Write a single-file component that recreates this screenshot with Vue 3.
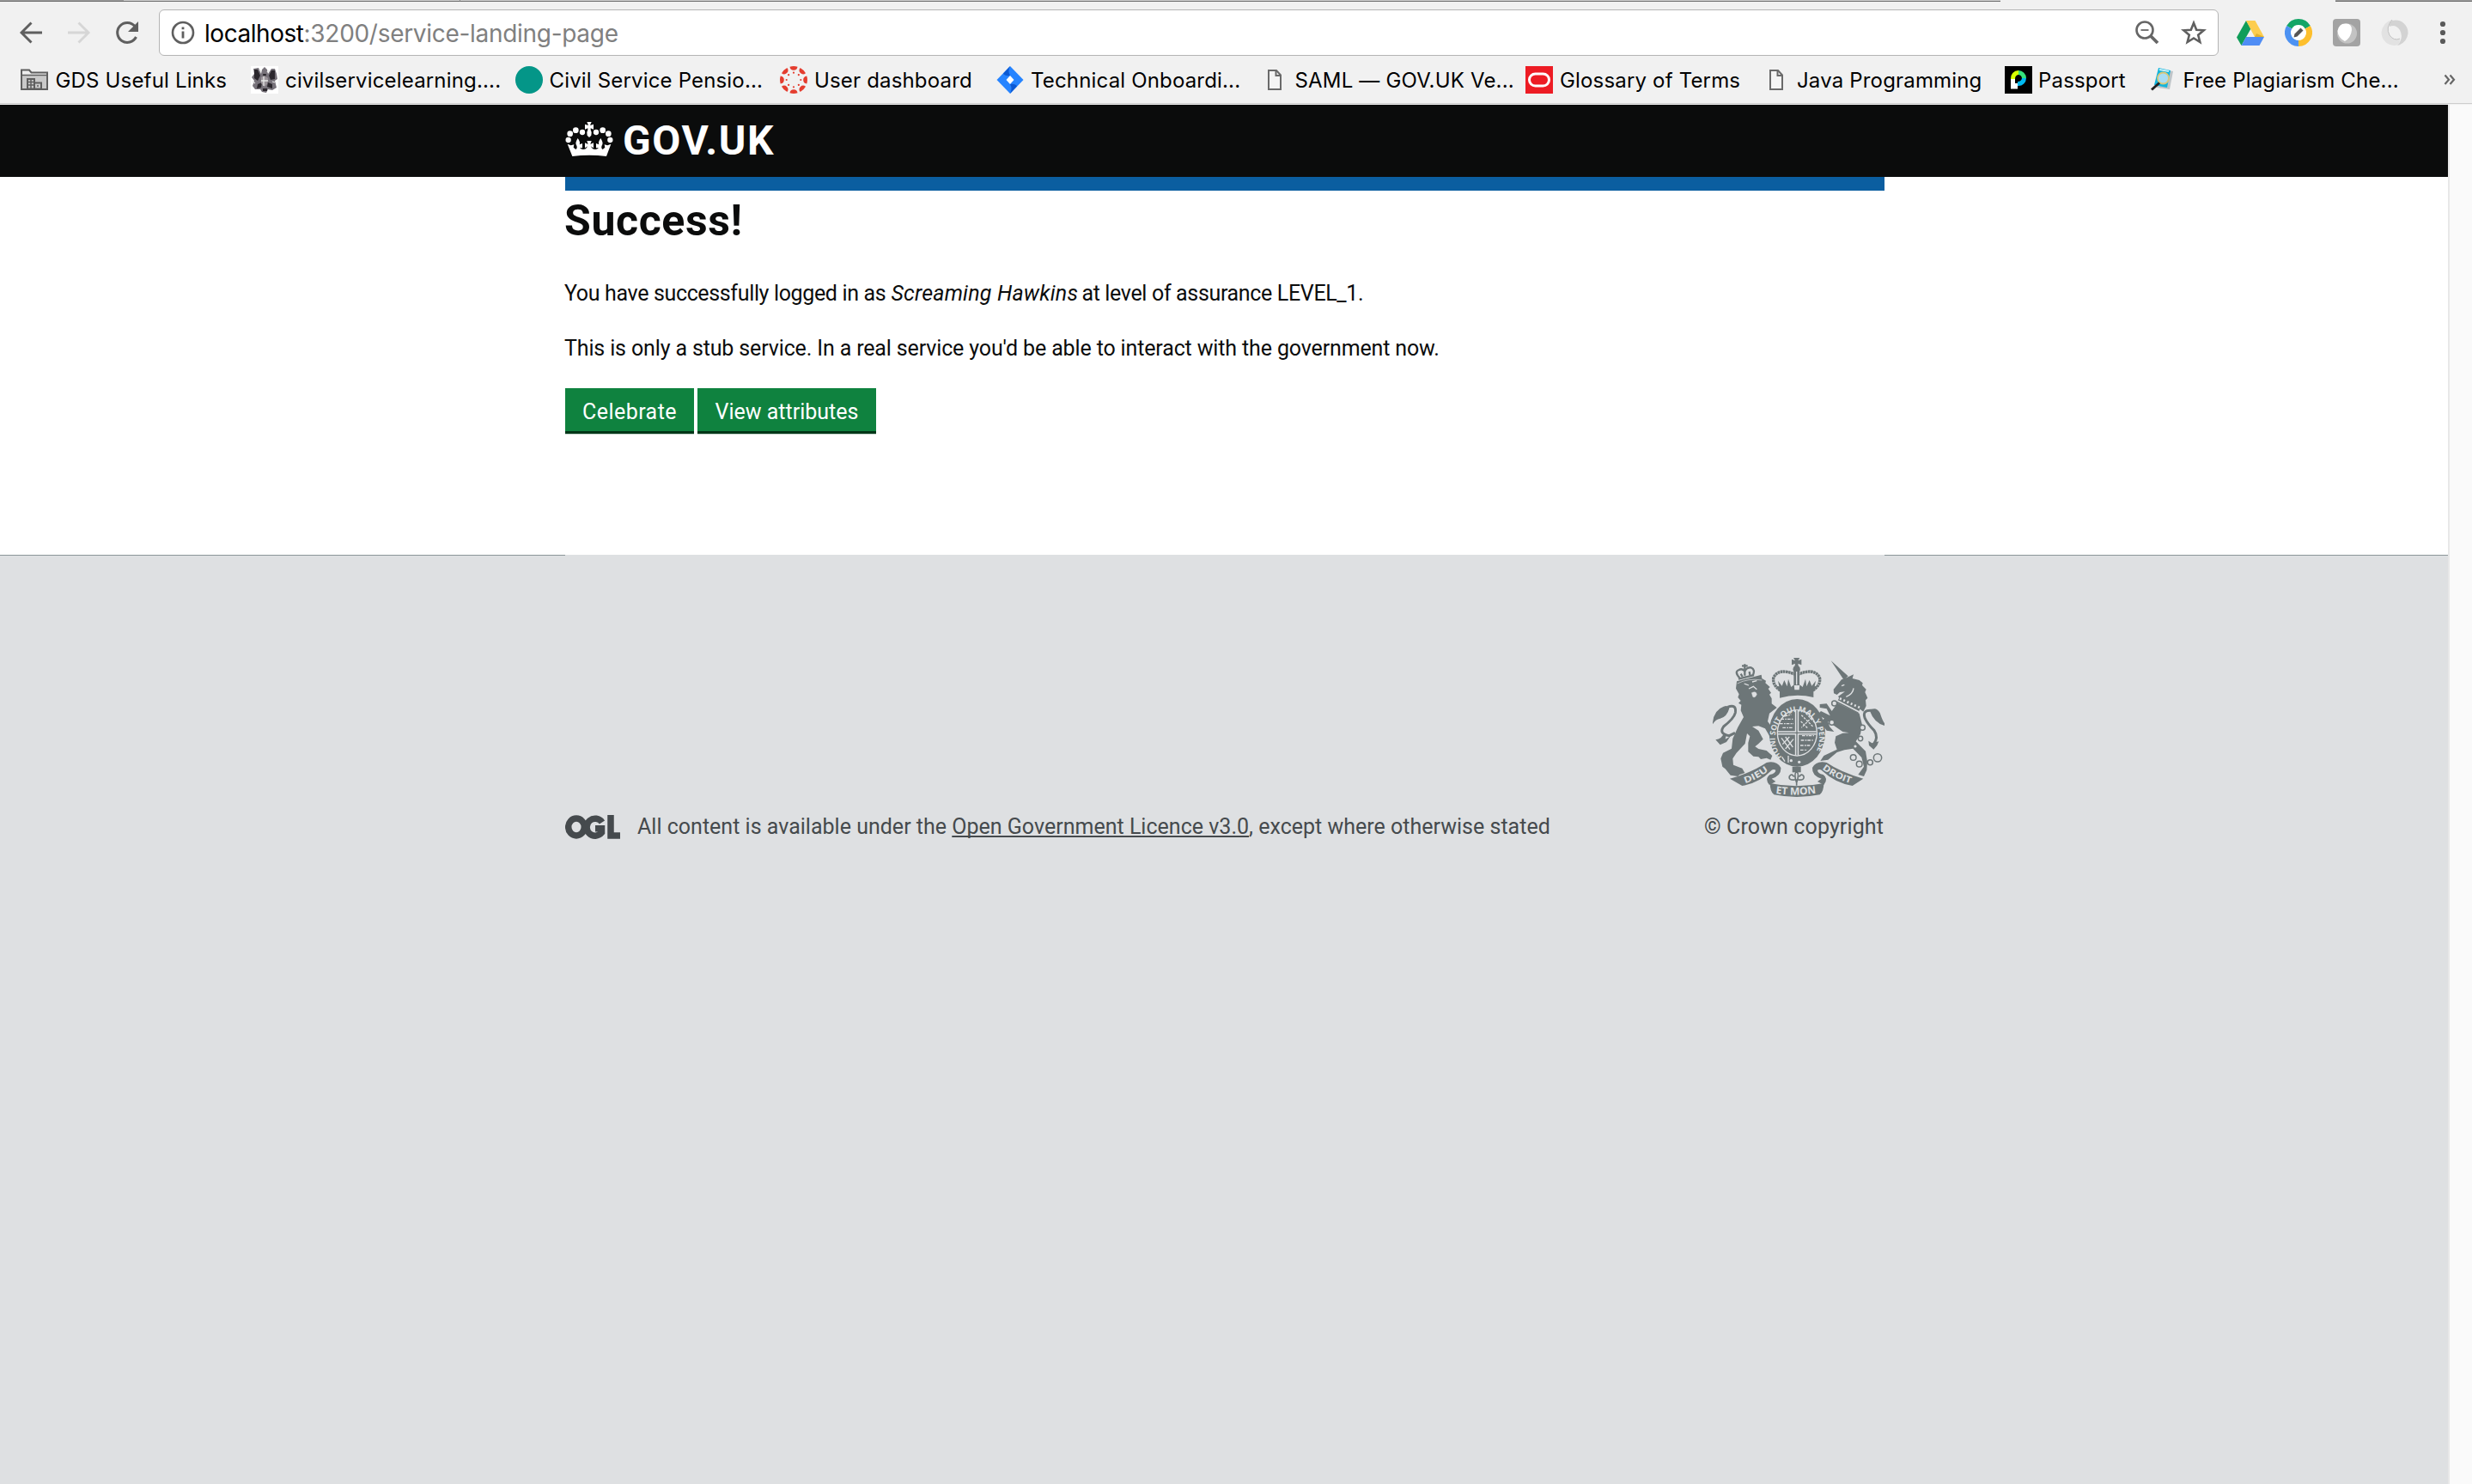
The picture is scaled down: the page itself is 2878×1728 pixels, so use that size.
<script setup>
const bookmarks = [
  { icon: 'folder', text: 'GDS Useful Links', width: 268, gap: 8.5 },
  { icon: 'arms', text: 'civilservicelearning....', width: 308, gap: 8 },
  { icon: 'teal', text: 'Civil Service Pensio...', width: 308, gap: 7.5 },
  { icon: 'canvas', text: 'User dashboard', width: 252, gap: 8 },
  { icon: 'jira', text: 'Technical Onboardi...', width: 308, gap: 8 },
  { icon: 'doc', text: 'SAML — GOV.UK Ve...', width: 308, gap: 7.5 },
  { icon: 'oracle', text: 'Glossary of Terms', width: 276, gap: 8 },
  { icon: 'doc', text: 'Java Programming', width: 282, gap: 8 },
  { icon: 'passport', text: 'Passport', width: 168, gap: 7 },
  { icon: 'search', text: 'Free Plagiarism Che...', width: 330, gap: 7.5 },
]
const spokes = [0, 45, 90, 135, 180, 225, 270, 315]
</script>

<template>
  <div class="window">
    <div class="tabs">
      <span class="tab dark first"></span>
      <span class="tab second"></span>
      <span class="tab third"></span>
      <span class="tab active"></span>
      <span class="tab dark last"></span>
    </div>

    <div class="toolbar">
      <svg class="nav" width="36" height="36" viewBox="0 0 36 36"><path d="M31 18H7M18.500 6.500L7 18L18.500 29.500" fill="none" stroke="#5f5f5f" stroke-width="2.900" /></svg>
      <svg class="nav" width="36" height="36" viewBox="0 0 36 36"><path d="M5 18H29M17.500 6.500L29 18L17.500 29.500" fill="none" stroke="#d6d6d6" stroke-width="2.900" /></svg>
      <svg class="nav reload" width="36" height="36" viewBox="0 0 36 36"><path d="M28.500 23A11.500 11.500 0 1 1 27 10.500" fill="none" stroke="#5f5f5f" stroke-width="3" /><path d="M31 5V17H19Z" fill="#5f5f5f" /></svg>
      <div class="address">
        <svg width="28" height="28" viewBox="0 0 28 28"><circle cx="14" cy="14" r="12" fill="none" stroke="#5f5f5f" stroke-width="2.600" /><path d="M14 12.500V20.500M14 7.500V10.300" stroke="#5f5f5f" stroke-width="2.800" /></svg>
        <span class="url"><span class="host">localhost</span>:3200/service-landing-page</span>
        <svg width="28" height="28" viewBox="0 0 28 28"><circle cx="11" cy="11" r="9.500" fill="none" stroke="#666" stroke-width="2.600" /><path d="M6.500 11H15.500" stroke="#777" stroke-width="2" /><path d="M17.500 17.500L26 26" stroke="#666" stroke-width="3.800" /></svg>
        <svg class="star" width="30" height="30" viewBox="0 0 30 30"><path d="M15 3.800L18.200 11.700L26.700 12.300L20.200 17.800L22.300 26L15 21.500L7.700 26L9.800 17.800L3.300 12.300L11.800 11.700Z" fill="none" stroke="#5f5f5f" stroke-width="2.600" /></svg>
      </div>
      <div class="extensions">
        <svg width="32" height="32" viewBox="0 0 32 32"><path d="M11 2L0 21.500L5.500 31L16.500 11.500Z" fill="#109d59" /><path d="M11 2H21.500L32 21H21Z" fill="#fdcd4e" /><path d="M5.500 31L11 21H32L26.500 31Z" fill="#4f8df5" /><path d="M21 21H32L23 17Z" fill="#e0b030" /></svg>
        <svg width="32" height="32" viewBox="0 0 32 32"><circle cx="16" cy="16" r="12.500" fill="#fff" /><g fill="none" stroke-width="7"><path d="M5.200 9.800A12.500 12.500 0 0 1 26.800 9.800" stroke="#12a566" /><path d="M26.800 9.800A12.500 12.500 0 0 1 16 28.500" stroke="#fdbf2d" /><path d="M16 28.500A12.500 12.500 0 0 1 5.200 9.800" stroke="#4d92f2" /></g><path d="M10.500 21.500L11.500 17.500L18.500 10.500L21.500 13.500L14.500 20.500Z" fill="#555" /></svg>
        <svg width="32" height="32" viewBox="0 0 32 32"><rect width="32" height="32" rx="4" fill="#a3a3a3" /><circle cx="16.500" cy="17" r="11.500" fill="#c3c3c3" /><path d="M5.500 14Q7 5 15 5.500Q22 5 22 13Q21 22 14 26Q6 22 5.500 14Z" fill="#fff" /></svg>
        <svg width="32" height="32" viewBox="0 0 32 32"><path d="M13 2A14.500 14.500 0 0 1 31.500 17Q30 28 19 31Q27 22 22 13Q17 6 10 9Q9 5 13 2Z" fill="#d3d3d3" /><path d="M19 30.500A15 15 0 0 1 0.500 16Q2 4 13 1Q5 10 10 19Q15 26 22 23Q23 27 19 30.500Z" fill="#e2e2e2" /><path d="M13 1Q5 10 10 19Q15 26 22 23" fill="none" stroke="#c2c2c2" /></svg>
        <svg class="more" width="8" height="32" viewBox="0 0 8 32"><g fill="#5a5a5a"><circle cx="4" cy="6" r="3.100" /><circle cx="4" cy="16" r="3.100" /><circle cx="4" cy="26" r="3.100" /></g></svg>
      </div>
    </div>

    <div class="bookmarks">
      <div v-for="b in bookmarks" :key="b.text" class="bookmark" :style="{ width: b.width + 'px', gap: b.gap + 'px' }">
        <svg v-if="b.icon === 'folder'" width="32" height="32" viewBox="0 0 32 32"><path d="M1 27V4.500H10L12.500 7.500H31V27Z" fill="#eee" stroke="#5f5f5f" stroke-width="2" /><path d="M2 11H30V26H2Z" fill="#c9c9c9" /><path d="M1 10.500H31" stroke="#5f5f5f" stroke-width="1.500" /><path d="M8 26V15H16V26M16 19.500H24V26M7 26.500H25" fill="none" stroke="#5f5f5f" stroke-width="2" /><path d="M12 15V26M8 18.500H16M8 22H16M20 22V24" stroke="#5f5f5f" stroke-width="1.500" /></svg>
        <svg v-else-if="b.icon === 'arms'" width="32" height="32" viewBox="0 0 32 32"><rect width="32" height="32" fill="#fff" /><path d="M3 3L9 2L12 9L13 4L16 1L19 4L20 9L24 3L28 3L30 9L31 15L28 17L30 25L25 28L20 27L18 31L13 30L11 27L5 27L2 23L4 17L1 13L4 9Z" fill="#77727a" /><path d="M4 4L8 4L11 11L8 17L4 14ZM24 5L28 5L28 15L23 16L21 11ZM14 9H18L17 13H15ZM8 21L13 19L12 25L7 26ZM20 19L25 21L25 26L19 24ZM14 26H19V29H14Z" fill="#2b272d" /><path d="M12 13L16 11L20 14L19 21L16 24L12 20Z" fill="#9b949a" /><path d="M15 12V23M12 17H20M2 18L5 20M28 19L25 18M10 4L12 6M21 5L19 7" stroke="#e6e6e6" stroke-width="1.300" /></svg>
        <svg v-else-if="b.icon === 'teal'" width="32" height="32" viewBox="0 0 32 32"><circle cx="16" cy="16" r="16" fill="#049688" /></svg>
        <svg v-else-if="b.icon === 'canvas'" width="32" height="32" viewBox="0 0 32 32"><g v-for="a in spokes" :key="a" :transform="'rotate(' + a + ' 16 16)'" fill="#e43d2f"><path d="M11.500 0.700A16 16 0 0 1 20.500 0.700Q20 4.800 16 4.800Q12 4.800 11.500 0.700Z" /><circle cx="16" cy="7.700" r="1.100" /></g></svg>
        <svg v-else-if="b.icon === 'jira'" width="32" height="32" viewBox="0 0 32 32"><path d="M16 0L31.500 16L16 32L0.500 16Z" fill="#2684ff" /><path d="M16 0L8 8.500Q10 12 16 11Q13 6 16 0ZM16 32L24 23.500Q22 20 16 21Q19 26 16 32Z" fill="#0b59d3" /><path d="M16 11L20.500 16L16 21L11.500 16Z" fill="#fff" /></svg>
        <svg v-else-if="b.icon === 'doc'" width="32" height="32" viewBox="0 0 32 32"><path d="M9 5H18L23 10.500V27H9Z" fill="#f4f4f4" stroke="#6a6a6a" stroke-width="2" /><path d="M17.500 5V11H23" fill="none" stroke="#6a6a6a" stroke-width="2" /></svg>
        <svg v-else-if="b.icon === 'oracle'" width="32" height="32" viewBox="0 0 32 32"><rect width="32" height="32" fill="#ed1c24" /><rect x="4.500" y="9" width="23" height="14" rx="7" fill="none" stroke="#fff" stroke-width="3" /></svg>
        <svg v-else-if="b.icon === 'passport'" width="32" height="32" viewBox="0 0 32 32"><rect width="32" height="32" fill="#000" /><path d="M7 15A9 9 0 0 1 16 5V10A5 5 0 0 0 12 15Z" fill="#d6ff00" /><path d="M16 5A9 9 0 0 1 25 14H20A4.500 4.500 0 0 0 16 10Z" fill="#34e27a" /><path d="M25 14A9 9 0 0 1 15 23V18A4.500 4.500 0 0 0 20 14Z" fill="#00b9f1" /><path d="M7 15H12V20H15V26.500H7Z" fill="#fff" /></svg>
        <svg v-else width="32" height="32" viewBox="0 0 32 32"><path d="M13 3L28 6L24 27L9 25Z" fill="#bfc5c8" /><path d="M11 2L25 5L21 25L6 22Z" fill="#12b4dc" /><path d="M12 4L23 6" stroke="#c9f0f8" stroke-width="2" /><circle cx="16.500" cy="14" r="6.500" fill="#a9dcf3" stroke="#d9c77a" stroke-width="1.800" /><path d="M12 19.500L3 27.500" stroke="#222" stroke-width="3" /></svg>
        <span>{{ b.text }}</span>
      </div>
      <svg class="overflow" width="14" height="32" viewBox="0 0 14 32"><path d="M1.500 10.500L6 15.800L1.500 21M7.500 10.500L12 15.800L7.500 21" fill="none" stroke="#666" stroke-width="2.200" /></svg>
    </div>

    <div class="viewport">
      <div class="page">
        <header>
          <svg width="56" height="42" viewBox="0 0 168 126">
            <g fill="#fff">
              <path d="M76 3H92L88 12V15L99 11V29L89 25V31Q94 38 91 50L84 57L77 50Q74 38 79 31V25L69 29V11L80 15V12Z" />
              <circle cx="60" cy="39" r="9.500" /><circle cx="108" cy="39" r="9.500" /><circle cx="37" cy="32" r="10" /><circle cx="131" cy="32" r="10" /><circle cx="17" cy="44" r="10" /><circle cx="151" cy="44" r="10" /><circle cx="11" cy="66" r="9.500" /><circle cx="157" cy="66" r="9.500" />
              <path d="M8 80L20 85L31 82L29 92L37 99Q45 94 38 82Q35 74 44 60Q54 73 50 82L60 78V94L51 93Q59 103 72 97L79 88L69 94V76L80 81L76 69H92L88 81L99 76V94L89 88L96 97Q109 103 117 93L108 94V78L118 82Q114 73 124 60Q133 74 130 82Q123 94 131 99L139 92L137 82L148 85L160 80L144 123Q84 115 25 123Z" />
            </g>
          </svg>
          <span class="brand">GOV.UK</span>
        </header>

        <main>
          <div class="bar"></div>
          <h1>Success!</h1>
          <p><span class="lead">You have successfully logged in as</span> <em>Screaming Hawkins</em> <span class="level">at level of assurance LEVEL_1.</span></p>
          <p class="stub">This is only a stub service. In a real service you'd be able to interact with the government now.</p>
          <div class="actions">
            <button class="celebrate">Celebrate</button>
            <button class="attributes">View attributes</button>
          </div>
        </main>

        <footer>
          <div class="rule"><span></span><span></span></div>
          <div class="footer-inner">
            <div class="licence">
              <svg width="64" height="28" viewBox="0 0 64 28"><g fill="none" stroke="#454a4d" stroke-width="7.500"><ellipse cx="13" cy="14" rx="9.300" ry="10" /><path d="M43 8.500A9.800 10 0 1 0 42.500 20.500V15.800H35" /><path d="M53 0V24H64" /></g></svg>
              <span class="available">All content is available under the <a>Open Government Licence v3.0</a>, except where otherwise stated</span>
            </div>
            <div class="copyright">
              <svg width="200" height="162" viewBox="102 78 600 486">
                <defs>
                  <path id="garter" d="M344 425A77 92 0 1 1 450 425" />
                  <path id="dieu" d="M215 516Q262 502 304 466" />
                  <path id="droit" d="M484 466Q530 502 590 518" />
                  <path id="etmon" d="M322 552Q395 562 468 550" />
                </defs>
                <g fill="#6d7678">
                  <path d="M186 160L272 137L274 150L288 158L286 166L302 180L296 186L306 200L300 206L308 220L308 238L326 252L300 272L294 300L312 325L318 352L300 350L285 325L262 316L240 318L262 332L278 362L262 378L250 388L262 396L290 402L310 420L304 434L290 428L270 432L262 424L244 422L226 406L226 375L232 352L222 342L215 378L185 410L172 430L174 452L205 464L214 480L196 486L190 492L164 488L146 466L136 458L130 430L138 410L168 395L172 360L190 320L210 285L200 262L202 242L192 236L200 228L190 216L194 205L183 185Z" />
                  <path d="M102 304Q106 260 140 248Q156 242 160 254Q152 284 128 290Q112 292 102 310ZM112 364Q134 362 142 340L150 344L146 362L164 352L150 372L128 382Z" />
                  <path d="M515 88L575 142L560 155Z" />
                  <path d="M524 188L552 154L572 146L594 136L590 150L614 156L626 166L624 174L638 188L634 198L643 218L636 226L638 246L628 266L610 252L548 224L540 213L564 196L546 198L536 207L525 202Z" />
                  <path d="M538 236L614 272L624 312L618 344L602 370L618 386L636 404L642 440L640 470L630 492L610 486L630 458L622 426L592 395L562 400L536 408L505 434L478 438L490 420L536 398L528 374L532 352L556 341L578 340L556 336L530 318L505 300L510 318L526 336L500 332L478 300L492 290L468 276L480 264L512 280L500 256L476 252L476 240L500 238L518 264Z" />
                  <path d="M650 262Q672 246 686 270Q696 300 702 306V315Q666 306 650 262ZM646 368L658 376L682 370L676 384L664 398L648 384Z" />
                  <path d="M336 194H454V216Q395 202 336 218Z" />
                  <ellipse cx="397" cy="340" rx="98" ry="118" />
                  <path d="M338 198L324 176L334 178L330 158L344 176L352 156L362 178L366 152L376 180L386 172L388 190H404L406 172L416 180L426 152L430 178L440 156L448 176L462 158L458 178L468 176L452 198Z" />
                  <path d="M384 78H406L400 88L412 83V103L400 98L402 110H388L390 98L378 103V83L390 88Z" />
                </g>
                <g fill="none" stroke="#6d7678">
                  <path d="M338 192Q308 170 315 145Q335 112 390 136M452 192Q482 170 475 145Q455 112 400 136" stroke-width="10" stroke-dasharray="8 1.500" />
                  <circle cx="395" cy="118" r="12" fill="#6d7678" /><path d="M395 126V174" stroke-width="20" /><path d="M395 126V172" stroke="#dee0e2" stroke-width="4" />
                  <path d="M196 148Q176 126 194 120Q204 114 214 124Q222 110 236 112Q252 118 242 140" stroke-width="7" /><path d="M204 106H224M214 100V140M200 134L206 144M230 126L232 138" stroke-width="7" /><path d="M192 152L246 138" stroke-width="7" />
                  <path d="M154 250Q186 238 181 270Q176 290 140 318Q122 344 160 350L180 340" stroke-width="9" />
                  <path d="M660 262Q622 258 634 290Q644 310 666 332Q682 356 664 380" stroke-width="9" />
                  <g stroke-width="4.500"><circle cx="527" cy="237" r="9" /><circle cx="518" cy="304" r="9" fill="#dee0e2" /><circle cx="625" cy="322" r="9" fill="#dee0e2" /><circle cx="618" cy="360" r="8" fill="#dee0e2" /><circle cx="600" cy="387" r="7" fill="#dee0e2" /><circle cx="593" cy="426" r="10" /><circle cx="614" cy="449" r="10" /><circle cx="652" cy="443" r="9" /><circle cx="678" cy="427" r="14" /></g>
                </g>
                <g fill="none" stroke="#dee0e2">
                  <path d="M188 168Q225 148 274 156" stroke-width="2" />
                  <path d="M212 168L228 174M240 162L256 158M228 186L244 178L256 188" stroke-width="4" /><path d="M238 200Q254 192 256 206Q250 220 242 214Z" fill="#dee0e2" />
                  <path d="M552 176L562 172M568 214Q592 204 594 184" stroke-width="4" />
                  <path d="M540 225L614 262" stroke="#6d7678" stroke-width="22" /><path d="M538 228L612 266" stroke-width="5" /><path d="M546 220L620 254" stroke-width="8" stroke-dasharray="6 8" />
                  <ellipse cx="397" cy="340" rx="69" ry="80" stroke-width="4" />
                  <path d="M396 260V418M330 340H464" stroke-width="13" /><path d="M396 260V418M330 340H464" stroke="#6d7678" stroke-width="4" />
                  <path d="M340 292H382M336 308H384M346 322H384M352 282L376 276M410 366H452M408 384H446M408 400H432M414 350H456" stroke-width="4" stroke-dasharray="11 4 5 3" />
                  <path d="M412 278L452 318M410 300L434 324M448 286L412 322M428 272L458 304" stroke-width="4" stroke-dasharray="8 4" />
                  <path d="M342 358L372 398M356 354L382 390M346 380L370 354M356 396L384 362" stroke-width="4" />
                  <path d="M344 424L354 440M366 420V444" stroke-width="4" />
                </g>
                <circle cx="376" cy="437" r="5" fill="#dee0e2" /><circle cx="404" cy="442" r="5" fill="#dee0e2" />
                <g fill="#6d7678">
                  <path d="M162 500Q240 478 290 444Q326 436 340 462Q342 490 308 500L322 510L300 522Q282 500 302 486Q322 482 322 470Q312 464 304 474Q264 515 205 525Z" />
                  <path d="M628 500Q550 478 500 444Q464 436 450 462Q448 490 482 500L468 510L490 522Q508 500 488 486Q468 482 468 470Q478 464 486 474Q530 515 590 525Z" />
                  <path d="M302 516Q395 536 490 516Q490 545 476 556Q395 572 316 556Q302 545 302 516Z" />
                  <path d="M380 458H410V478H380Z" />
                </g>
                <path d="M395 474Q384 486 395 514Q406 486 395 474M389 504Q366 506 370 492Q378 480 386 494M401 504Q424 506 420 492Q412 480 404 494M384 504H406M395 504V524" fill="none" stroke="#6d7678" stroke-width="5" />
                <g class="motto">
                  <text font-size="27"><textPath href="#garter" textLength="384" lengthAdjust="spacingAndGlyphs">HONI SOIT QUI MAL Y PENSE</textPath></text>
                  <text font-size="31"><textPath href="#dieu" textLength="94" lengthAdjust="spacingAndGlyphs">DIEU</textPath></text>
                  <text font-size="31"><textPath href="#droit" textLength="112" lengthAdjust="spacingAndGlyphs">DROIT</textPath></text>
                  <text font-size="36"><textPath href="#etmon" textLength="142" lengthAdjust="spacingAndGlyphs">ET MON</textPath></text>
                </g>
              </svg>
              <span class="crown">© Crown copyright</span>
            </div>
          </div>
        </footer>
      </div>
      <div class="scrollbar"></div>
    </div>
  </div>
</template>

<style>
html,
body {
  margin: 0;
  overflow: hidden;
}
</style>

<style scoped>
.window {
  width: 2878px;
  height: 1728px;
  display: flex;
  flex-direction: column;
  background: #f1f1f1;
  font-family: Inter, sans-serif;
}
svg {
  flex: none;
  display: block;
}
.tabs {
  height: 2px;
  display: flex;
}
.tab {
  box-sizing: border-box;
  height: 2px;
  background: #d0d0d0;
  border-bottom: 1px solid #6f6f6f;
}
.tab.dark { background: #9b9b9b; }
.first { width: 144px; }
.second { width: 392px; border-right: 1px solid #8a8a8a; }
.third { width: 1793px; }
.tab.active { width: 390px; background: #f1f1f1; border: 0; }
.last { flex: 1; }
.toolbar {
  height: 72px;
  box-sizing: border-box;
  display: flex;
  align-items: center;
  padding-left: 18px;
}
.nav { margin-right: 20px; }
.nav.reload { margin-right: 19px; }
.address {
  box-sizing: border-box;
  width: 2398px;
  height: 54px;
  border: 1px solid #b4b4b4;
  border-radius: 6px;
  background: #fff;
  display: flex;
  align-items: center;
  padding: 0 13px 0 13px;
}
.url {
  flex: 1;
  margin-left: 11px;
  padding-top: 1px;
  font-size: 28px;
  line-height: 34px;
  letter-spacing: -0.3px;
  color: #808080;
}
.host {
  color: #000;
  letter-spacing: -0.45px;
}
.star { margin-left: 25px; }
.extensions {
  display: flex;
  align-items: center;
  gap: 24px;
  margin-left: 21px;
}
.more { margin-left: 12px; }
.bookmarks {
  height: 47px;
  box-sizing: border-box;
  border-bottom: 1px solid #cdcdcd;
  padding: 3px 0 0 24px;
  display: flex;
  align-items: flex-start;
}
.bookmark {
  flex: none;
  display: flex;
  white-space: nowrap;
  font-size: 24px;
  line-height: 34px;
  letter-spacing: 0.17px;
  color: #000;
}
.overflow { margin-left: 13px; }
.viewport {
  flex: 1;
  display: flex;
  margin-top: 1px;
}
.page {
  width: 2850px;
  display: flex;
  flex-direction: column;
  background: #fff;
  color: #0b0c0c;
  font-family: Roboto, sans-serif;
  font-size: 25px;
  line-height: 32px;
}
.scrollbar {
  flex: 1;
  background: #fafafa;
  border-left: 2px solid #e8e8e8;
}
header {
  height: 84px;
  padding-left: 658px;
  display: flex;
  align-items: center;
  gap: 11px;
  background: #0b0c0c;
  color: #fff;
}
header svg { margin-bottom: 5px; }
.brand {
  font-size: 48px;
  font-weight: 700;
  line-height: 84px;
  letter-spacing: 1.6px;
}
main {
  height: 440px;
  width: 1536px;
  margin-left: 658px;
}
.bar {
  height: 16px;
  background: #0b5ea0;
}
h1 {
  margin: 0 0 34px -1px;
  font-size: 50px;
  line-height: 70px;
  font-weight: 700;
  letter-spacing: 0.6px;
}
p {
  margin: 0 0 32px -1px;
}
.lead { letter-spacing: -0.35px; }
em { letter-spacing: 0.2px; }
.level {
  margin-left: -2px;
  letter-spacing: -0.34px;
}
.stub {
  margin-bottom: 30px;
  letter-spacing: -0.14px;
}
.actions {
  display: flex;
  gap: 4px;
}
button {
  box-sizing: border-box;
  height: 53px;
  margin: 0;
  padding: 5px 0 0;
  border: 0;
  border-bottom: 3px solid #003618;
  box-shadow: 0 1px 0 #c3d3c9;
  background: #0f823f;
  color: #fff;
  font: 25px/45px Roboto, sans-serif;
}
.celebrate {
  width: 150px;
  letter-spacing: 0.45px;
}
.attributes { width: 208px; }
footer {
  flex: 1;
  background: #dee0e2;
  color: #454a4d;
}
.rule {
  height: 1px;
  display: flex;
  justify-content: space-between;
}
.rule span {
  width: 658px;
  background: #8c9699;
}
.rule span:last-child { width: 656px; }
.footer-inner {
  width: 1536px;
  margin-left: 658px;
  padding-top: 119px;
  display: flex;
  justify-content: space-between;
  align-items: flex-end;
}
.licence {
  display: flex;
  align-items: center;
  gap: 20px;
}
.available { letter-spacing: 0.01px; }
.available a {
  text-decoration: underline;
  text-decoration-thickness: 2px;
  text-underline-offset: 2px;
  text-decoration-skip-ink: none;
}
.copyright {
  display: flex;
  flex-direction: column;
  align-items: flex-end;
  gap: 19px;
}
.crown {
  margin-right: 1px;
  letter-spacing: 0.12px;
}
.motto {
  fill: #dee0e2;
  font-family: "Open Sans", sans-serif;
  font-weight: 700;
}
</style>
